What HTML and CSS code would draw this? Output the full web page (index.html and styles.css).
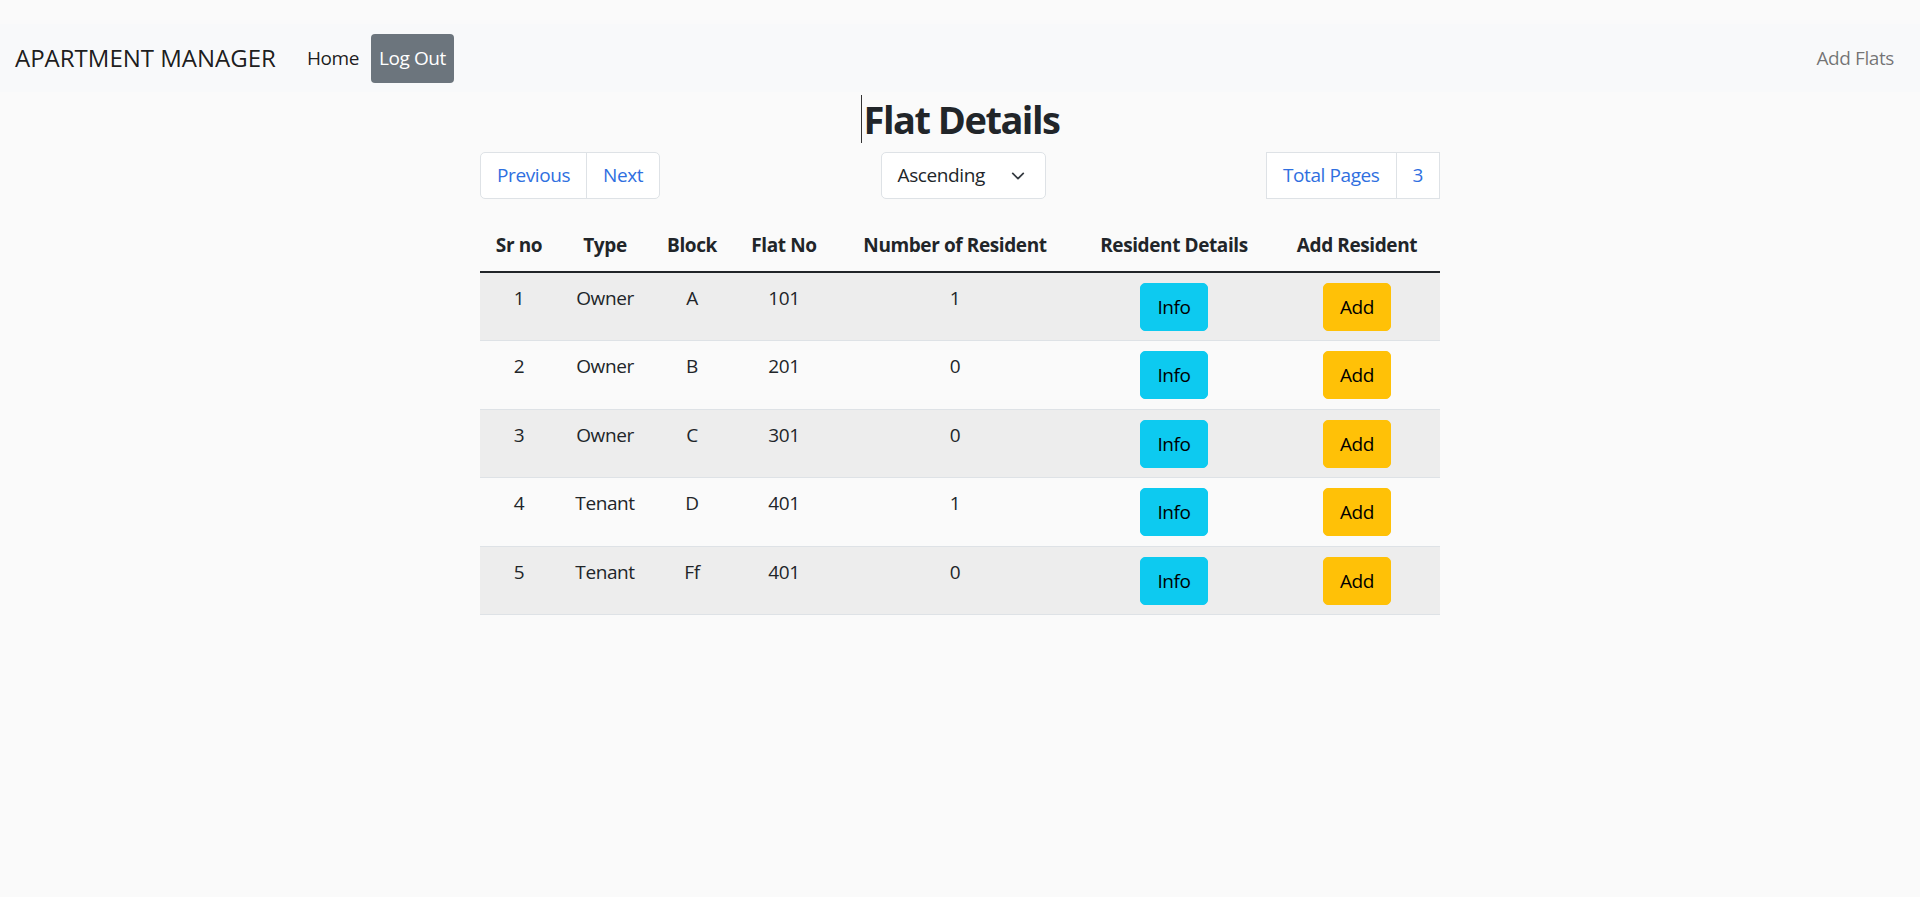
FILE: index.html
```html
<!DOCTYPE html>
<html lang="en">
<head>
<meta charset="utf-8">
<title>Apartment Manager</title>
<link rel="stylesheet" href="styles.css">
</head>
<body>
<nav class="navbar">
  <div class="nav-left">
    <span class="brand">APARTMENT MANAGER</span>
    <a class="nav-link" href="#">Home</a>
    <a class="nav-link logout" href="#">Log Out</a>
  </div>
  <a class="nav-link muted" href="#">Add Flats</a>
</nav>
<main class="content">
  <h1 class="title"><span class="caret"></span>Flat Details</h1>
  <div class="controls">
    <div class="pager">
      <a class="page-item" href="#">Previous</a>
      <a class="page-item" href="#">Next</a>
    </div>
    <div class="select">
      <span>Ascending</span>
      <svg class="chev" width="16" height="16" viewBox="0 0 16 16"><path d="M2 5l6 6 6-6" fill="none" stroke="#343a40" stroke-width="2" stroke-linecap="round" stroke-linejoin="round"/></svg>
    </div>
    <div class="total">
      <span class="total-item">Total Pages</span>
      <span class="total-item">3</span>
    </div>
  </div>
  <table class="flats">
    <colgroup>
      <col class="c1"><col class="c2"><col class="c3"><col class="c4"><col class="c5"><col class="c6"><col class="c7">
    </colgroup>
    <thead>
      <tr><th>Sr no</th><th>Type</th><th>Block</th><th>Flat No</th><th>Number of Resident</th><th>Resident Details</th><th>Add Resident</th></tr>
    </thead>
    <tbody>
      <tr><td>1</td><td>Owner</td><td>A</td><td>101</td><td>1</td><td><a class="btn info" href="#">Info</a></td><td><a class="btn add" href="#">Add</a></td></tr>
      <tr><td>2</td><td>Owner</td><td>B</td><td>201</td><td>0</td><td><a class="btn info" href="#">Info</a></td><td><a class="btn add" href="#">Add</a></td></tr>
      <tr><td>3</td><td>Owner</td><td>C</td><td>301</td><td>0</td><td><a class="btn info" href="#">Info</a></td><td><a class="btn add" href="#">Add</a></td></tr>
      <tr><td>4</td><td>Tenant</td><td>D</td><td>401</td><td>1</td><td><a class="btn info" href="#">Info</a></td><td><a class="btn add" href="#">Add</a></td></tr>
      <tr><td>5</td><td>Tenant</td><td>Ff</td><td>401</td><td>0</td><td><a class="btn info" href="#">Info</a></td><td><a class="btn add" href="#">Add</a></td></tr>
    </tbody>
  </table>
</main>
</body>
</html>
```

FILE: styles.css
```css
* { box-sizing: border-box; }
html, body { margin: 0; padding: 0; }
body {
  background: #fafafa;
  color: #212529;
  font-family: "Open Sans", "Noto Sans", sans-serif;
  font-size: 19px;
  letter-spacing: -0.4px;
  line-height: 1.5;
  padding-top: 24px;
}
a { text-decoration: none; }

.navbar {
  background: #f8f9fa;
  height: 68px;
  display: flex;
  align-items: center;
  justify-content: space-between;
  padding: 0 18px 0 15px;
}
.nav-left { display: flex; align-items: center; }
.brand {
  font-size: 24px;
  letter-spacing: 0;
  line-height: 36px;
  color: rgba(0,0,0,.9);
  margin-right: 23px;
}
.nav-link {
  display: block;
  padding: 9.5px 8px;
  line-height: 30px;
  color: rgba(0,0,0,.9);
}
.nav-link.logout {
  background: #6c757d;
  color: #fff;
  border-radius: 4px;
  margin-left: 4px;
}
.nav-link.muted { color: rgba(0,0,0,.55); }

.content {
  width: 960px;
  margin: 0 auto;
}
.title {
  margin: 3px 0 9px;
  font-size: 38px;
  letter-spacing: -1.5px;
  line-height: 48px;
  font-weight: 700;
  text-align: center;
}
.caret {
  display: inline-block;
  width: 1px;
  height: 48px;
  background: #333;
  vertical-align: top;
  margin-right: 2px;
}

.controls {
  display: flex;
  justify-content: space-between;
  align-items: center;
}
.pager {
  display: flex;
  border: 1px solid #dee2e6;
  border-radius: 5px;
  background: #fff;
  overflow: hidden;
}
.page-item {
  padding: 8px 16px;
  line-height: 29px;
  color: #2f6fe0;
}
.page-item + .page-item { border-left: 1px solid #dee2e6; }

.select {
  width: 165px;
  height: 47px;
  display: flex;
  align-items: center;
  justify-content: space-between;
  padding: 0 20px 0 16px;
  background: #fff;
  border: 1px solid #dee2e6;
  border-radius: 5px;
  color: #212529;
}
.chev { width: 14px; height: 14px; }

.total {
  display: flex;
  border: 1px solid #dee2e6;
  background: #fff;
}
.total-item {
  padding: 8px 16px;
  line-height: 29px;
  color: #2f6fe0;
}
.total-item + .total-item { border-left: 1px solid #dee2e6; }

.flats {
  width: 960px;
  margin-top: 23px;
  border-collapse: collapse;
  table-layout: fixed;
  text-align: center;
}
.c1 { width: 78px; }
.c2 { width: 94px; }
.c3 { width: 80px; }
.c4 { width: 104px; }
.c5 { width: 238px; }
.c6 { width: 200px; }
.c7 { width: 166px; }

.flats th {
  font-weight: 700;
  padding: 8px 0 10.5px;
  line-height: 30px;
  border-bottom: 2px solid #212529;
  white-space: nowrap;
}
.flats td {
  padding: 10px 0 9.6px;
  line-height: 30px;
  vertical-align: top;
  border-bottom: 1px solid #dee2e6;
  white-space: nowrap;
}
.flats tbody tr:nth-child(odd) td { background: #ededed; }

.btn {
  display: inline-block;
  padding: 8px 16px;
  line-height: 30px;
  border: 1px solid transparent;
  border-radius: 5px;
  color: #000;
}
.btn.info { background: #0dcaf0; border-color: #0dcaf0; }
.btn.add { background: #ffc107; border-color: #ffc107; }
```
